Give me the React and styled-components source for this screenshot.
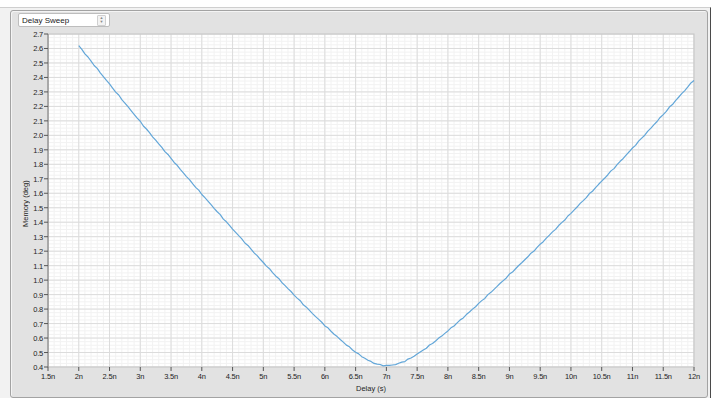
import React from "react";
import styled, { createGlobalStyle } from "styled-components";

const GlobalStyle = createGlobalStyle`
  html, body {
    margin: 0;
    padding: 0;
    background: #ffffff;
  }
  body {
    font-family: "Liberation Sans", Arial, sans-serif;
  }
`;

// chart geometry (inside the svg)
const SVG_W = 674;
const SVG_H = 354;
const PX = 18;
const PY = 4;
const PW = 646;
const PH = 333;
const X_MIN = 1.5;
const X_MAX = 12;
const Y_MIN = 0.4;
const Y_MAX = 2.7;

const sx = (v) => PX + ((v - X_MIN) / (X_MAX - X_MIN)) * PW;
const sy = (v) => PY + ((Y_MAX - v) / (Y_MAX - Y_MIN)) * PH;

const yTicks = Array.from({ length: 24 }, (_, i) => +(Y_MIN + i * 0.1).toFixed(1));
const xTicks = Array.from({ length: 22 }, (_, i) => X_MIN + i * 0.5);

const sweep = (x) => {
  const d = x - 7;
  if (d < 0) return Math.sqrt(0.1764 * d * d + 0.04) + 0.21 + 0.012 * d * d;
  return Math.sqrt(0.1444 * d * d + 0.04) + 0.21 + 0.0105 * d * d;
};

const buildCurve = () => {
  const pts = [];
  for (let i = 0; i <= 200; i++) {
    const x = 2 + i * 0.05;
    const wobble = 0.004 * Math.sin(i * 2.3) * Math.sin(i * 0.37);
    pts.push(`${sx(x).toFixed(2)},${sy(sweep(x) + wobble).toFixed(2)}`);
  }
  return "M" + pts.join(" L");
};

const Screen = styled.div`
  width: 713px;
  height: 405px;
  padding-top: 7px;
  box-sizing: border-box;
`;

const Shell = styled.div`
  width: 711px;
  height: 391px;
  box-sizing: border-box;
  padding: 2px 2px 0 10px;
  background: #f2f2f2;
  border-top: 1px solid #cfcfcf;
  border-right: 1px solid #4a4a4a;
`;

const Frame = styled.div`
  width: 698px;
  height: 388px;
  box-sizing: border-box;
  display: flex;
  flex-direction: column;
  background: #e2e2e2;
  border: 1px solid #a3a3a3;
  border-radius: 3px;
  box-shadow: inset 1px 1px 0 #f4f4f4;
`;

const Toolbar = styled.div`
  display: flex;
  padding: 2px 0 0 7px;
  height: 16px;
`;

const Select = styled.div`
  display: flex;
  align-items: center;
  justify-content: space-between;
  width: 92px;
  height: 14px;
  box-sizing: border-box;
  padding: 0 3px 0 3px;
  background: #ffffff;
  border: 1px solid #bdbdbd;
  border-radius: 2px;
  font-size: 8px;
  color: #1a1a1a;
`;

const Spinner = styled.span`
  display: flex;
  flex-direction: column;
  align-items: center;
  justify-content: center;
  width: 7px;
  height: 9px;
  border: 1px solid #d0d0d0;
  border-radius: 1px;
  background: #f3f3f3;
  font-size: 4px;
  line-height: 4px;
  color: #8a8a8a;
`;

const Body = styled.div`
  display: grid;
  grid-template-columns: 10px ${SVG_W}px;
  grid-template-rows: ${SVG_H}px 10px;
  padding: 1px 0 0 9px;
`;

const YTitle = styled.div`
  display: flex;
  align-items: center;
  justify-content: center;
  writing-mode: vertical-rl;
  transform: rotate(180deg);
  font-size: 7.5px;
  color: #1e1e1e;
  padding-top: 6px;
`;

const XTitle = styled.div`
  grid-column: 2;
  margin-left: ${PX}px;
  width: ${PW}px;
  text-align: center;
  font-size: 7.5px;
  line-height: 10px;
  color: #1e1e1e;
`;

const Chart = styled.svg`
  display: block;
  font-family: "Liberation Sans", Arial, sans-serif;
`;

const TickLabel = styled.text`
  font-size: 7.5px;
  letter-spacing: -0.2px;
  fill: #1e1e1e;
`;

const fmtX = (v) => `${v}n`;

export default function App() {
  const minorX = [];
  for (let v = X_MIN; v <= X_MAX + 1e-9; v += 0.1) minorX.push(v);
  const minorY = [];
  for (let v = Y_MIN; v <= Y_MAX + 1e-9; v += 0.025) minorY.push(v);

  return (
    <>
      <GlobalStyle />
      <Screen>
        <Shell>
          <Frame>
            <Toolbar>
              <Select>
                <span>Delay Sweep</span>
                <Spinner>
                  <span>▲</span>
                  <span>▼</span>
                </Spinner>
              </Select>
            </Toolbar>
            <Body>
              <YTitle>Memory (deg)</YTitle>
              <Chart width={SVG_W} height={SVG_H} viewBox={`0 0 ${SVG_W} ${SVG_H}`}>
                <rect x={PX} y={PY} width={PW} height={PH} fill="#ffffff" />
                {minorX.map((v, i) => (
                  <line key={`mx${i}`} x1={sx(v)} x2={sx(v)} y1={PY} y2={PY + PH} stroke="#f2f2f2" strokeWidth="1" />
                ))}
                {minorY.map((v, i) => (
                  <line key={`my${i}`} x1={PX} x2={PX + PW} y1={sy(v)} y2={sy(v)} stroke="#f2f2f2" strokeWidth="1" />
                ))}
                {xTicks.map((v) => (
                  <line key={`gx${v}`} x1={sx(v)} x2={sx(v)} y1={PY} y2={PY + PH} stroke="#dcdcdc" strokeWidth="1" />
                ))}
                {yTicks.map((v) => (
                  <line key={`gy${v}`} x1={PX} x2={PX + PW} y1={sy(v)} y2={sy(v)} stroke="#dcdcdc" strokeWidth="1" />
                ))}
                <rect x={PX} y={PY} width={PW} height={PH} fill="none" stroke="#c4c4c4" strokeWidth="1" />
                <line x1={PX} x2={PX} y1={PY} y2={PY + PH} stroke="#7d7d7d" strokeWidth="1" />

                {yTicks.map((v) => (
                  <g key={`ty${v}`}>
                    <line x1={PX - 4} x2={PX} y1={sy(v)} y2={sy(v)} stroke="#555" strokeWidth="1" />
                    <TickLabel x={PX - 5} y={sy(v) + 3} textAnchor="end">
                      {v.toFixed(1)}
                    </TickLabel>
                  </g>
                ))}
                {xTicks.map((v) => (
                  <g key={`tx${v}`}>
                    <line x1={sx(v)} x2={sx(v)} y1={PY + PH} y2={PY + PH + 4} stroke="#555" strokeWidth="1" />
                    <TickLabel x={sx(v)} y={PY + PH + 12} textAnchor="middle">
                      {fmtX(v)}
                    </TickLabel>
                  </g>
                ))}

                <path d={buildCurve()} fill="none" stroke="#62a6d8" strokeWidth="1.2" strokeLinejoin="round" />
              </Chart>
              <XTitle>Delay (s)</XTitle>
            </Body>
          </Frame>
        </Shell>
      </Screen>
    </>
  );
}
